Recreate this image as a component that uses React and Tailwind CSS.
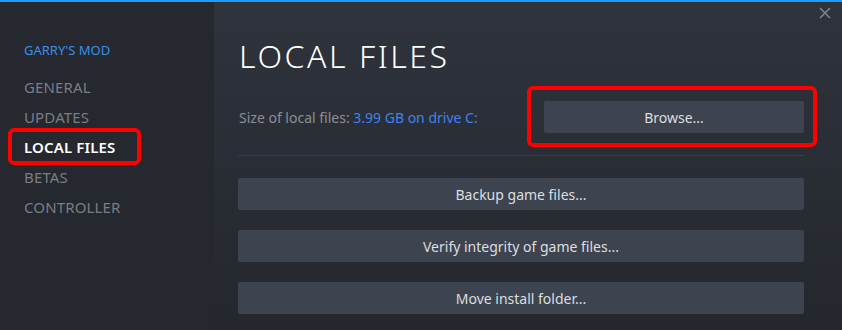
import React from "react";

const font = { fontFamily: '"Noto Sans", "Open Sans", Arial, sans-serif' };

function NavItem({ label, active }) {
  return (
    <div className="relative h-[30px] flex items-center">
      {active && (
        <div className="absolute left-[-16px] top-[-4px] w-[133px] h-[37px] border-4 border-[#ff0000] rounded-[6px]" />
      )}
      <span
        className={
          "text-[15px] tracking-[0.01em] " +
          (active ? "text-white font-semibold" : "text-[#7a7d84]")
        }
      >
        {label}
      </span>
    </div>
  );
}

function Btn({ children }) {
  return (
    <div className="h-[32px] w-full rounded-[2px] bg-[#3d4450] flex items-center justify-center text-[14px] text-[#dcdedf]">
      {children}
    </div>
  );
}

export default function App() {
  return (
    <div
      className="w-[842px] h-[330px] flex flex-col overflow-hidden bg-[#24272d]"
      style={font}
    >
      <div className="h-[2px] bg-[#1a9fff] shrink-0" />
      <div className="flex flex-1">
        <div className="w-[214px] shrink-0 bg-[#25282e] pl-[24px] pt-[39px]">
          <div className="text-[13px] text-[#3d8fe8] h-[20px] flex items-center mb-[11px]">
            GARRY'S MOD
          </div>
          <div className="flex flex-col">
            <NavItem label="GENERAL" />
            <NavItem label="UPDATES" />
            <NavItem label="LOCAL FILES" active />
            <NavItem label="BETAS" />
            <NavItem label="CONTROLLER" />
          </div>
        </div>
        <div className="relative flex-1 bg-gradient-to-b from-[#2f333c] to-[#24272d] pl-[24px] pr-[38px] pt-[34px]">
          <div className="absolute right-[10px] top-[4px] text-[#7d838b]">
            <svg width="14" height="14" viewBox="0 0 14 14">
              <path d="M2 2 L12 12 M12 2 L2 12" stroke="currentColor" strokeWidth="1.6" />
            </svg>
          </div>
          <div className="text-[32px] font-light text-white tracking-[0.08em] leading-[40px] pl-[1px]">
            LOCAL FILES
          </div>
          <div className="flex items-center mt-[25px] h-[32px]">
            <div className="flex-1 text-[14px] text-[#8b8e95] pl-[1px]">
              Size of local files: <span className="text-[#3f82f0]">3.99 GB on drive C:</span>
            </div>
            <div className="relative w-[260px]">
              <div className="absolute left-[-17px] top-[-15px] w-[290px] h-[61px] border-4 border-[#ff0000] rounded-[6px]" />
              <Btn>Browse...</Btn>
            </div>
          </div>
          <div className="h-px bg-[#3a3e47] mt-[22px] mb-[22px]" />
          <div className="flex flex-col gap-[20px]">
            <Btn>Backup game files...</Btn>
            <Btn>Verify integrity of game files...</Btn>
            <Btn>Move install folder...</Btn>
          </div>
        </div>
      </div>
    </div>
  );
}
